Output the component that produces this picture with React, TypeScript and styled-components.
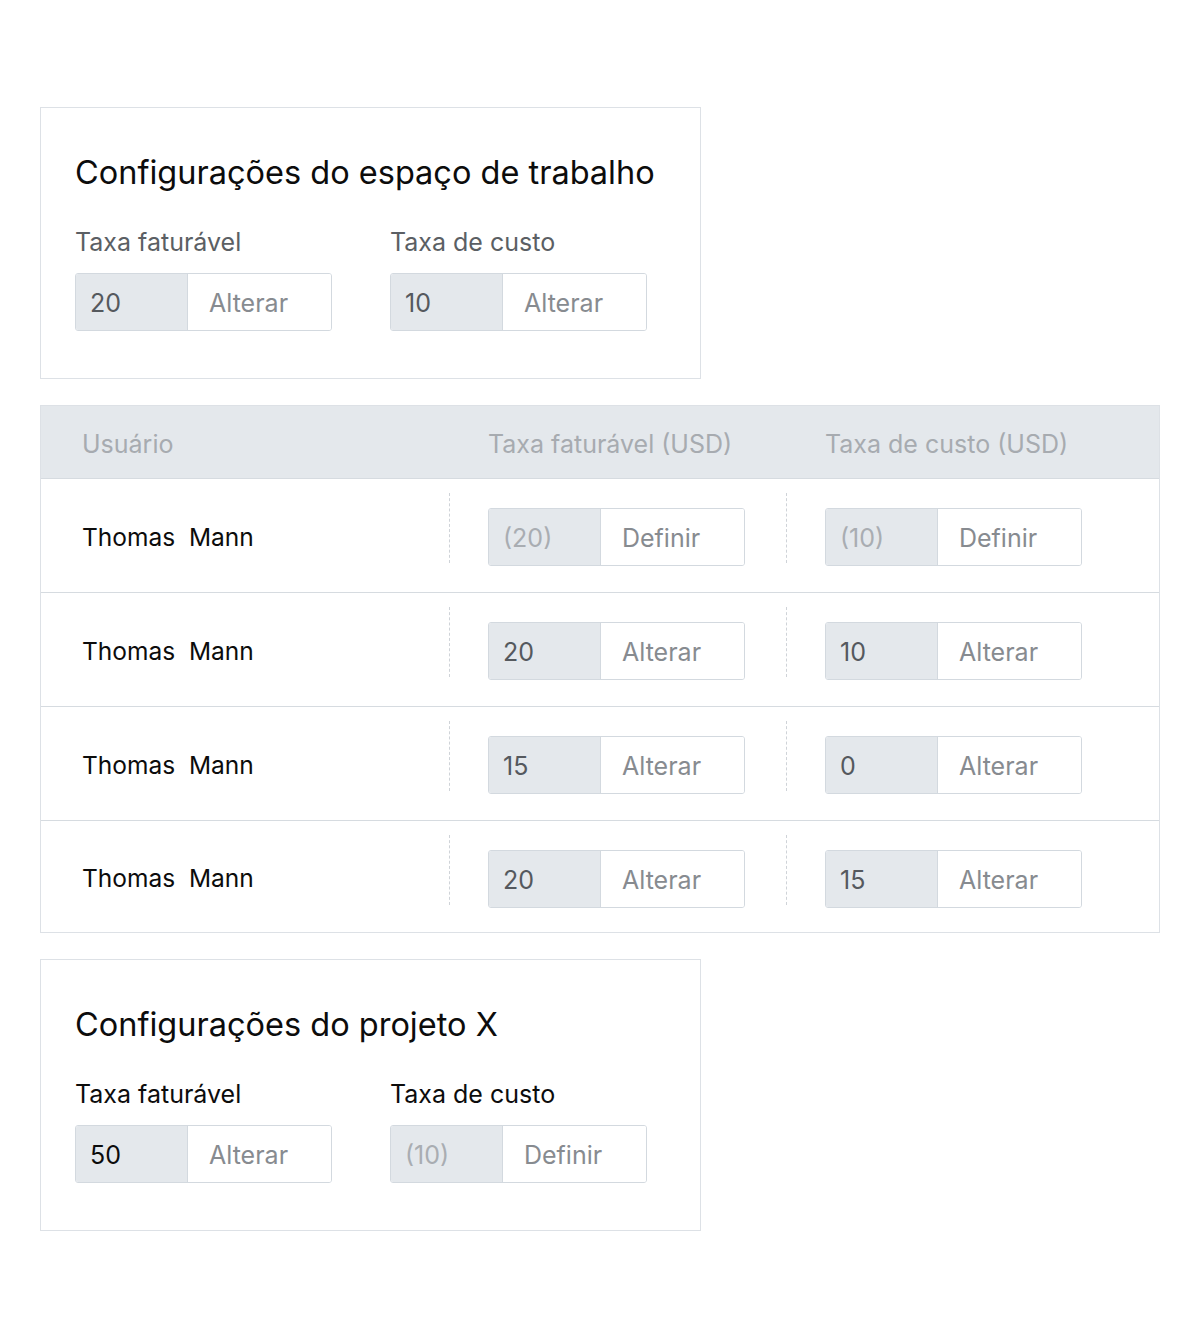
import React from "react";
import styled, { createGlobalStyle } from "styled-components";

const Global = createGlobalStyle`
  html, body { margin: 0; padding: 0; background: #ffffff; }
  body { font-family: Inter, "Noto Sans", "Liberation Sans", sans-serif; -webkit-font-smoothing: antialiased; }
  * { box-sizing: border-box; }
`;

const Page = styled.div`
  width: 1200px;
  min-height: 1339px;
  padding: 107px 40px 0 40px;
  display: flex;
  flex-direction: column;
  gap: 26px;
`;

const Card = styled.section`
  width: 661px;
  border: 1.5px solid #dde1e6;
  padding: 45px 34px 47px 34px;
  display: flex;
  flex-direction: column;
`;

const Title = styled.h2`
  margin: 0 0 34px 0;
  font-size: 32.5px;
  line-height: 40px;
  font-weight: 400;
  color: #0c0c0c;
`;

const Fields = styled.div`
  display: flex;
  gap: 58px;
`;

const Field = styled.div`
  display: flex;
  flex-direction: column;
  gap: 16px;
`;

const Label = styled.div<{ $dark?: boolean }>`
  font-size: 25px;
  line-height: 30px;
  color: ${(p) => (p.$dark ? "#0c0c0c" : "#5b5f64")};
`;

const Group = styled.div`
  display: flex;
  width: 257px;
  height: 58px;
  border: 1.5px solid #d3d9df;
  border-radius: 3px;
  overflow: hidden;
`;

const Value = styled.div<{ $tone: "dark" | "mid" | "faint" }>`
  width: 112px;
  flex: none;
  background: #e4e8ec;
  border-right: 1.5px solid #d3d9df;
  display: flex;
  align-items: center;
  padding-left: 14px;
  padding-top: 2px;
  font-size: 25px;
  color: ${(p) => (p.$tone === "dark" ? "#0c0c0c" : p.$tone === "mid" ? "#55595e" : "#a9adb2")};
`;

const Action = styled.div`
  flex: 1;
  background: #fff;
  display: flex;
  align-items: center;
  padding-left: 21px;
  padding-top: 2px;
  font-size: 25px;
  color: #878b90;
`;

const Table = styled.div`
  width: 1120px;
  border: 1.5px solid #dde1e6;
  display: flex;
  flex-direction: column;
`;

const HeaderRow = styled.div`
  display: grid;
  grid-template-columns: 408px 337px 1fr;
  height: 73px;
  background: #e4e8ec;
  border-bottom: 1.5px solid #d6dbe0;
  align-items: center;
`;

const HeadCell = styled.div<{ $first?: boolean }>`
  font-size: 25px;
  padding-top: 4px;
  color: #a7abb0;
  padding-left: ${(p) => (p.$first ? "41px" : "39px")};
`;

const Row = styled.div<{ $last?: boolean }>`
  display: grid;
  grid-template-columns: 408px 337px 1fr;
  height: ${(p) => (p.$last ? "111px" : "114px")};
  border-bottom: ${(p) => (p.$last ? "none" : "1.5px solid #d6dbe0")};
`;

const NameCell = styled.div`
  display: flex;
  align-items: center;
  padding-left: 41px;
  padding-top: 3px;
  font-size: 24.5px;
  color: #0c0c0c;
  white-space: pre;
`;

const RateCell = styled.div`
  position: relative;
  padding: 29px 0 0 39px;
  &::before {
    content: "";
    position: absolute;
    left: 0;
    top: 14px;
    height: 70px;
    border-left: 1px dashed #cfd3d8;
  }
`;

type RateProps = { value: string; tone: "dark" | "mid" | "faint"; action: string };

const Rate = ({ value, tone, action }: RateProps) => (
  <Group>
    <Value $tone={tone}>{value}</Value>
    <Action>{action}</Action>
  </Group>
);

const rows: { bill: RateProps; cost: RateProps }[] = [
  { bill: { value: "(20)", tone: "faint", action: "Definir" }, cost: { value: "(10)", tone: "faint", action: "Definir" } },
  { bill: { value: "20", tone: "mid", action: "Alterar" }, cost: { value: "10", tone: "mid", action: "Alterar" } },
  { bill: { value: "15", tone: "mid", action: "Alterar" }, cost: { value: "0", tone: "mid", action: "Alterar" } },
  { bill: { value: "20", tone: "mid", action: "Alterar" }, cost: { value: "15", tone: "mid", action: "Alterar" } },
];

export default function App() {
  return (
    <>
      <Global />
      <Page>
        <Card>
          <Title>Configurações do espaço de trabalho</Title>
          <Fields>
            <Field>
              <Label>Taxa faturável</Label>
              <Rate value="20" tone="mid" action="Alterar" />
            </Field>
            <Field>
              <Label>Taxa de custo</Label>
              <Rate value="10" tone="mid" action="Alterar" />
            </Field>
          </Fields>
        </Card>

        <Table>
          <HeaderRow>
            <HeadCell $first>Usuário</HeadCell>
            <HeadCell>Taxa faturável (USD)</HeadCell>
            <HeadCell>Taxa de custo (USD)</HeadCell>
          </HeaderRow>
          {rows.map((r, i) => (
            <Row key={i} $last={i === rows.length - 1}>
              <NameCell>{"Thomas  Mann"}</NameCell>
              <RateCell>
                <Rate {...r.bill} />
              </RateCell>
              <RateCell>
                <Rate {...r.cost} />
              </RateCell>
            </Row>
          ))}
        </Table>

        <Card>
          <Title>Configurações do projeto X</Title>
          <Fields>
            <Field>
              <Label $dark>Taxa faturável</Label>
              <Rate value="50" tone="dark" action="Alterar" />
            </Field>
            <Field>
              <Label $dark>Taxa de custo</Label>
              <Rate value="(10)" tone="faint" action="Definir" />
            </Field>
          </Fields>
        </Card>
      </Page>
    </>
  );
}
